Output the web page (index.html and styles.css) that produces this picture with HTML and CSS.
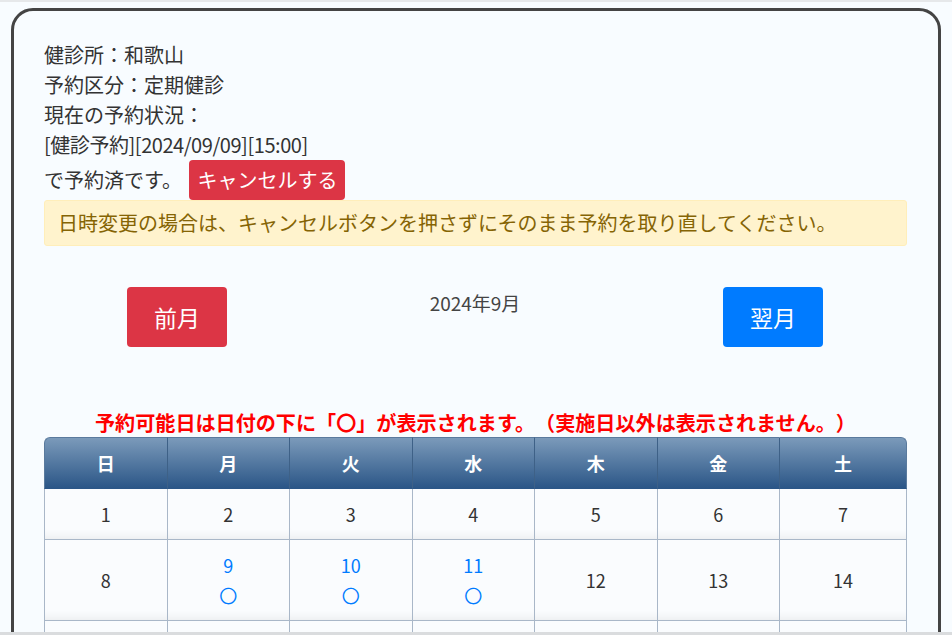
FILE: index.html
```html
<!DOCTYPE html>
<html lang="ja">
<head>
<meta charset="utf-8">
<title>予約</title>
<link rel="stylesheet" href="styles.css">
</head>
<body>
<div class="topline"></div>
<div class="card">
  <div class="info">
    <div>健診所：和歌山</div>
    <div>予約区分：定期健診</div>
    <div>現在の予約状況：</div>
    <div class="latin">[健診予約][2024/09/09][15:00]</div>
    <div class="done">で予約済です。 <span class="btn btn-cancel">キャンセルする</span></div>
  </div>
  <div class="alert">日時変更の場合は、キャンセルボタンを押さずにそのまま予約を取り直してください。</div>
  <div class="nav">
    <span class="btn btn-nav btn-prev">前月</span>
    <span class="month">2024年9月</span>
    <span class="btn btn-nav btn-next">翌月</span>
  </div>
  <p class="notice">予約可能日は日付の下に「〇」が表示されます。（実施日以外は表示されません。）</p>
  <table class="cal">
    <thead>
      <tr><th>日</th><th>月</th><th>火</th><th>水</th><th>木</th><th>金</th><th>土</th></tr>
    </thead>
    <tbody>
      <tr><td>1</td><td>2</td><td>3</td><td>4</td><td>5</td><td>6</td><td>7</td></tr>
      <tr><td>8</td><td class="ok">9<br>〇</td><td class="ok">10<br>〇</td><td class="ok">11<br>〇</td><td>12</td><td>13</td><td>14</td></tr>
      <tr><td>15</td><td>16</td><td>17</td><td>18</td><td>19</td><td>20</td><td>21</td></tr>
      <tr><td>22</td><td>23</td><td>24</td><td>25</td><td>26</td><td>27</td><td>28</td></tr>
      <tr><td>29</td><td>30</td><td></td><td></td><td></td><td></td><td></td></tr>
    </tbody>
  </table>
</div>
<div class="bottomline"></div>
</body>
</html>
```
FILE: styles.css
```css
html, body {
  margin: 0;
  padding: 0;
}
body {
  background: #f8fcff;
  color: #333;
  font-family: "Noto Sans CJK JP", "Noto Sans", sans-serif;
  font-size: 20px;
  line-height: 30px;
  text-spacing-trim: space-all;
}
.topline {
  height: 2px;
  background: #e6e8ea;
}
.bottomline {
  position: fixed;
  left: 0;
  right: 0;
  bottom: 0;
  height: 3px;
  background: #dadcde;
}
.card {
  margin: 6px 0 0 11px;
  width: 930px;
  box-sizing: border-box;
  border: 3px solid #444;
  border-radius: 22px;
  background: #f8fcff;
  padding: 29px 31px 40px 30px;
}
.info div {
  height: 30px;
}
.info .latin {
  letter-spacing: -0.45px;
}
.info .done {
  height: 40px;
}
.btn {
  display: inline-block;
  color: #fff;
  border-radius: 4px;
  text-align: center;
}
.btn-cancel {
  background: #dc3545;
  padding: 5px 8px;
  line-height: 30px;
  margin-left: 3px;
}
.alert {
  background: #fff3cd;
  border: 1px solid #ffeeba;
  border-radius: 3px;
  color: #856404;
  padding: 7px 13px;
}
.nav {
  display: flex;
  justify-content: space-between;
  align-items: flex-start;
  margin-top: 41px;
  padding: 0 84px 0 83px;
}
.btn-nav {
  width: 100px;
  height: 60px;
  line-height: 60px;
  font-size: 23px;
}
.btn-prev {
  background: #dc3545;
}
.btn-next {
  background: #007bff;
}
.month {
  font-size: 19px;
  line-height: 30px;
  margin-top: 1px;
  color: #444;
}
.notice {
  margin: 62px 0 0;
  text-align: center;
  color: #ff0000;
  font-weight: bold;
  font-size: 20.1px;
  line-height: 28px;
}
.cal {
  width: 100%;
  border-collapse: separate;
  border-spacing: 0;
  table-layout: fixed;
  margin-top: 0;
}
.cal th {
  width: 121.5px;
  background: linear-gradient(#7b9aba, #2b5687);
  color: #fff;
  font-size: 18px;
  font-weight: bold;
  line-height: 30px;
  padding: 10px 0;
  border-left: 1px solid #3e6187;
  border-top: 1px solid #5a7a9d;
  border-bottom: 1px solid #2b5687;
}
.cal th:first-child {
  border-top-left-radius: 6px;
  border-left-color: #5a7a9d;
}
.cal th:last-child {
  width: auto;
  border-top-right-radius: 6px;
  border-right: 1px solid #5a7a9d;
}
.cal td {
  text-align: center;
  font-size: 18px;
  line-height: 30px;
  padding: 10px 0;
  background: #fafcfe;
  border-left: 1px solid #a9b7c8;
  border-bottom: 1px solid #a9b7c8;
  box-shadow: inset 0 -10px 10px -8px rgba(0, 0, 0, 0.07);
  color: #333;
}
.cal td:last-child {
  border-right: 1px solid #a9b7c8;
}
.cal td.ok {
  color: #007bff;
}
```
